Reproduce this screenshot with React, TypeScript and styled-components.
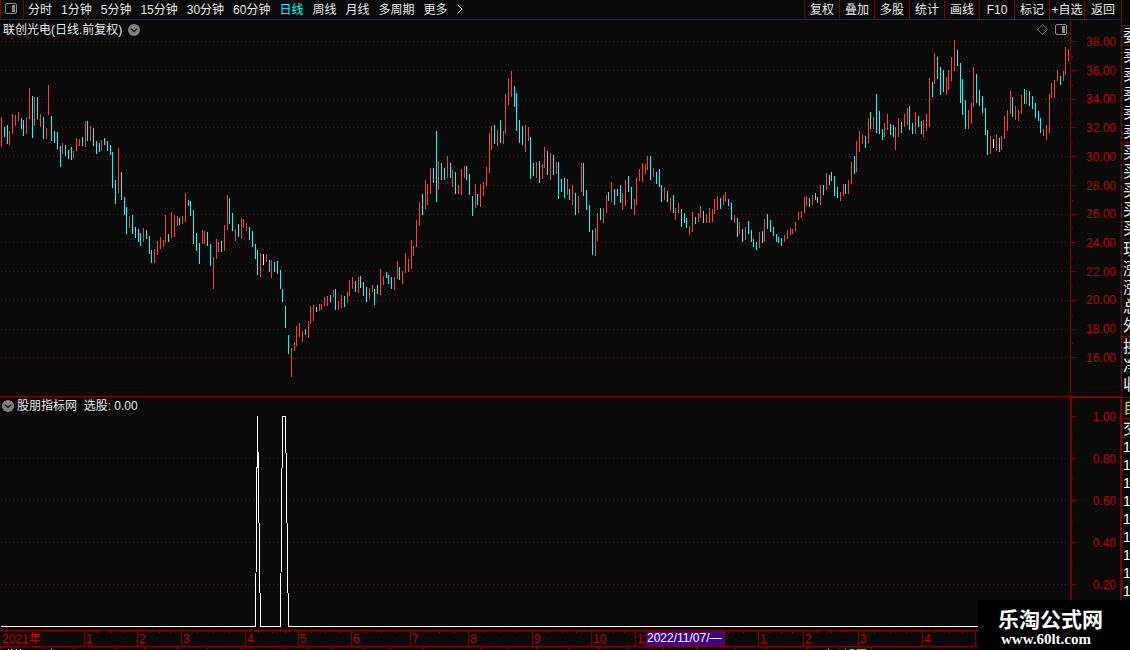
import React, { useState } from 'react';
import styled, { createGlobalStyle } from 'styled-components';

const color = {
  bg: '#0a0a0a',
  line: '#800000',
  grid: '#6a0c0c',
  label: '#c00000',
  text: '#e8e8e8',
  up: '#ff3c3c',
  down: '#00ffff',
  flat: '#ffffff',
  icon: '#8a8a8a',
};

const GlobalStyle = createGlobalStyle`
  * { box-sizing: border-box; }
  html, body { margin: 0; background: ${color.bg}; }
  body {
    font-family: "Liberation Sans", "Noto Sans CJK SC", sans-serif;
    font-size: 12px;
    line-height: 14px;
    color: ${color.text};
  }
`;

/* One bar per trading day: direction, x, high, low (chart units). */
const BARS = `
r1 117 147,c4 127 137,c7 125 144,r9 131 145,r12 114 134,r15 115 126,r18 112 121,c21 118 129,c23 120 136,r26 117 134,
r29 88 119,c32 96 138,r34 97 126,c37 97 119,r40 114 127,c43 117 139,r46 128 139,r48 85 115,c51 116 141,c54 131 143,
c57 132 149,c60 146 167,r62 143 154,c65 145 156,c68 150 159,c71 147 160,r73 151 158,r76 138 151,r79 139 146,c82 137 146,
r85 121 147,c87 121 141,r90 126 141,c93 128 146,c96 141 154,c99 143 152,r101 140 151,c104 138 145,c107 141 151,c110 145 155,
c112 152 188,c115 180 204,r118 148 193,c121 172 200,c124 197 215,c126 207 234,r129 216 228,c132 215 234,c135 227 238,c138 229 242,
c140 233 246,r143 228 242,c146 230 239,c149 236 254,c151 250 263,r154 249 263,r157 241 255,r160 237 249,r163 240 247,r165 215 243,
c168 234 242,r171 212 238,r174 215 237,r177 216 226,c179 218 225,r182 216 224,r185 193 222,c188 200 206,c190 201 216,c193 210 244,
c196 233 251,c199 243 264,r202 230 244,r204 231 244,c207 232 246,c210 244 266,r213 257 289,r216 239 259,r218 242 252,c221 241 252,
r224 225 251,r227 195 230,c229 198 224,c232 213 231,r235 229 241,c238 224 237,r241 218 239,r243 219 228,r246 223 231,c249 227 240,
c252 231 247,c255 244 259,c257 250 275,r260 253 277,w263 254 265,r266 254 262,c269 260 272,r271 260 278,c274 262 272,c277 261 274,
c280 270 289,c282 289 302,c285 306 328,c288 335 354,r291 348 377,r294 342 351,r296 326 346,r299 323 337,r302 331 342,c305 329 335,
r308 321 338,r310 306 324,r313 305 321,c316 307 312,r319 304 311,r321 304 310,r324 297 306,r327 296 306,c330 295 302,r333 290 297,
c335 289 310,r338 301 310,r341 295 308,c344 296 307,r347 292 303,r349 280 296,r352 277 289,c355 281 292,r358 277 293,c360 276 288,
c363 282 296,c366 287 302,r369 288 299,r372 285 292,c374 289 305,c377 285 294,r380 269 295,r383 276 285,c386 272 278,c388 275 284,
c391 277 289,r394 277 290,r397 261 279,c399 267 280,r402 271 284,r405 253 273,r408 259 272,r411 240 269,r413 246 256,r416 220 247,
r419 202 226,c422 194 215,r425 180 209,r427 184 205,r430 168 194,c433 168 183,c436 131 202,r438 161 190,c441 163 180,c444 168 180,
r447 156 178,c450 163 178,r452 170 187,c455 172 194,r458 185 194,r461 169 195,r464 166 178,c466 166 180,c469 174 195,c472 196 216,
r475 184 208,c477 194 205,r480 184 207,r483 182 196,r486 167 186,r489 133 173,r491 126 150,c494 125 144,r497 130 146,c500 120 143,
r503 131 144,r505 94 134,r508 79 105,r511 71 97,c514 86 107,c516 93 131,c519 120 143,c522 126 145,r525 125 152,r528 127 141,
c530 137 179,c533 163 176,r536 162 178,c539 161 183,r542 164 179,r544 147 168,c547 151 175,r550 153 180,c553 155 175,r556 162 174,
c558 162 199,c561 179 192,c564 178 198,r567 179 195,c569 189 200,r572 185 205,c575 193 215,r578 196 213,r581 163 192,c583 163 196,
c586 190 210,c589 205 232,c592 230 255,r595 228 256,r597 213 241,c600 208 220,r603 208 223,r606 195 213,c608 192 201,r611 182 202,
c614 189 205,c617 189 196,c620 185 203,r622 193 210,r625 180 206,c628 176 192,c631 187 209,r634 199 215,r636 178 205,r639 169 181,
r642 163 182,r645 164 174,r647 156 170,c650 156 180,r653 168 177,c656 172 184,c659 169 187,c661 185 202,r664 187 200,c667 191 202,
r670 198 211,c673 195 213,r675 208 220,r678 203 213,c681 209 227,c684 213 223,c686 218 228,r689 226 235,r692 212 232,c695 217 224,
r698 213 222,r700 206 218,c703 211 223,r706 214 223,r709 208 223,r712 209 222,r714 199 214,r717 196 210,c720 198 209,r723 195 205,
r725 192 202,c728 199 206,c731 203 220,r734 215 223,c737 218 237,r739 222 234,c742 229 242,r745 227 240,c748 221 234,c751 230 242,
c753 239 247,c756 242 250,r759 232 248,c762 231 243,r764 219 242,c767 214 229,c770 220 232,c773 227 236,c776 234 242,c778 237 243,
c781 238 246,r784 235 242,r787 230 239,r790 228 235,r792 229 234,r795 222 231,r798 212 220,r801 211 218,r804 197 213,r806 196 206,
c809 198 207,r812 195 205,c815 193 200,c817 197 203,r820 185 205,c823 185 195,r826 173 190,c829 175 185,c831 172 181,c834 176 196,
c837 187 198,r840 192 201,r843 184 196,c845 184 194,r848 180 194,r851 162 184,c854 156 174,r856 141 172,r859 131 152,r862 134 144,
c865 136 148,r868 118 143,c870 112 129,r873 117 129,c876 94 133,c879 111 134,c882 129 140,r884 123 137,r887 114 130,c890 124 135,
c893 125 137,r895 127 150,r898 118 137,c901 122 133,r904 114 127,r907 108 125,c909 106 130,c912 123 134,r915 112 134,c918 116 127,
c921 121 134,r923 120 137,r926 114 131,r929 78 127,c932 82 97,r934 53 84,c937 57 79,c940 67 95,c943 70 92,r946 77 95,
r948 70 90,r951 57 81,r954 40 71,c957 50 66,c960 63 103,c962 79 115,c965 100 129,r968 110 129,r971 103 123,r973 67 107,
c976 74 103,c979 90 106,c982 96 113,c985 108 135,c987 130 155,r990 136 154,w993 139 148,r996 135 151,c999 138 152,r1001 136 150,
r1004 116 139,r1007 110 131,r1010 91 114,c1012 97 117,r1015 106 120,r1018 110 121,r1021 95 114,c1024 89 104,r1026 90 104,c1029 91 106,
c1032 96 109,c1035 103 118,c1038 111 121,c1040 118 133,r1043 129 136,r1046 125 140,r1049 94 133,r1051 83 98,r1054 80 98,r1057 70 81,
c1060 76 85,r1063 71 81,r1065 47 75,r1068 49 61`
  .trim()
  .split(/,\s*/)
  .map((entry) => {
    const [x, high, low] = entry.slice(1).split(' ').map(Number);
    const kind = entry[0];
    return { x, high, low, fill: kind === 'r' ? color.up : kind === 'c' ? color.down : color.flat };
  });

const PERIODS = ['分时', '1分钟', '5分钟', '15分钟', '30分钟', '60分钟', '日线', '周线', '月线', '多周期', '更多'];
const ACTIONS = ['复权', '叠加', '多股', '统计', '画线', 'F10', '标记', '+自选', '返回'];

const PRICE_LABELS = ['38.00', '36.00', '34.00', '32.00', '30.00', '28.00', '26.00', '24.00', '22.00', '20.00', '18.00', '16.00'];
const PRICE_GRID = [41, 70, 99, 127, 156, 185, 214, 242, 271, 300, 329, 357];
const PRICE_MINOR = [56, 85, 113, 142, 171, 200, 228, 257, 286, 315, 343];
const VALUE_LABELS = ['1.00', '0.80', '0.60', '0.40', '0.20'];
const VALUE_GRID = [416, 458, 500, 542, 584];
const VALUE_MINOR = [437, 479, 521, 563];

/* Month label and its share of the time axis. */
const MONTHS: [string, number][] = [
  ['2021年', 84], ['1', 53], ['2', 44], ['3', 64], ['4', 53], ['5', 53], ['6', 59], ['7', 58], ['8', 64],
  ['9', 59], ['10', 44], ['11', 123], ['1', 45], ['2', 55], ['3', 64], ['4', 53], ['5', 146],
];
const WEEK_TICKS = [
  97, 111, 124, 150, 159, 170, 197, 213, 229, 258, 272, 285, 311, 325, 339, 366, 381, 395, 425, 439, 454,
  483, 500, 516, 547, 562, 576, 602, 613, 624, 728, 743, 769, 781, 792, 817, 831, 845, 874, 890, 906, 935, 949, 962,
];
const TAB_EDGES = [
  0, 42, 73, 115, 144, 177, 207, 241, 282, 308, 332, 364, 390, 422, 480, 508, 536, 568, 599, 628, 663, 696, 735, 766, 807, 839, 871,
];

const QUOTES: { rows: string[]; tail?: number; accent?: boolean }[] = [
  { rows: ['委'] },
  { rows: ['卖', '卖', '卖', '卖', '卖'], tail: 1 },
  { rows: ['买', '买', '买', '买', '买'], tail: 1 },
  { rows: ['现', '涨', '涨', '总', '外'], tail: 1 },
  { rows: ['换', '净', '收'], tail: 3 },
  { rows: ['自'], tail: 1, accent: true },
];

const Page = styled.div`
  position: relative;
  display: flex;
  height: 100vh;
  min-height: 400px;
  overflow: hidden;
  background: ${color.bg};
`;

const Main = styled.main`
  flex: 1;
  min-width: 0;
  display: flex;
  flex-direction: column;
`;

const Toolbar = styled.header`
  display: flex;
  height: 20px;
  flex: none;
  border-left: 1px solid ${color.line};
  border-bottom: 1px solid ${color.line};
`;

const PlainButton = styled.button`
  appearance: none;
  display: flex;
  align-items: center;
  justify-content: center;
  padding: 0;
  border: 0;
  background: none;
  color: inherit;
  font: inherit;
  white-space: nowrap;
  cursor: pointer;
`;

const LayoutToggle = styled(PlainButton)`
  width: 23px;
  padding-right: 2px;
  padding-bottom: 2px;
  border-right: 1px solid ${color.line};
`;

const Periods = styled.nav`
  display: flex;
  flex: 1;
  gap: 9px;
  padding-left: 4px;
  overflow: hidden;
`;

const PeriodButton = styled(PlainButton)<{ $active: boolean }>`
  color: ${(p) => (p.$active ? color.down : color.text)};
`;

const MoreButton = styled(PlainButton)`
  padding-bottom: 2px;
`;

const Actions = styled.div`
  display: flex;
`;

const ActionButton = styled(PlainButton)`
  width: 35px;
  border-left: 1px solid ${color.line};
  &:last-child { width: 37px; }
`;

const Pane = styled.section<{ $share: number }>`
  display: flex;
  flex: ${(p) => p.$share} 1 0px;
  min-height: 0;
`;

const PricePane = styled(Pane)`
  box-shadow: inset 0 -1px ${color.line};
`;

const Plot = styled.div`
  flex: 1;
  min-width: 0;
  display: grid;
  grid-template: minmax(0, 1fr) / minmax(0, 1fr);
`;

const Drawing = styled.svg`
  grid-area: 1 / 1;
  display: block;
  width: 100%;
  height: 100%;
  shape-rendering: crispEdges;
`;

const PlotHeader = styled.div<{ $height: number }>`
  grid-area: 1 / 1;
  align-self: start;
  z-index: 1;
  display: flex;
  align-items: center;
  height: ${(p) => p.$height}px;
  padding: 0 3px 0 2px;
  white-space: pre;
`;

const Title = styled.h1`
  margin: 0 6px 0 1px;
  font-size: 12px;
  font-weight: 400;
`;

const Reading = styled.p`
  margin: 0 0 0 3px;
`;

const HeaderTools = styled.div`
  display: flex;
  gap: 7px;
  margin-left: auto;
`;

const Axis = styled.div<{ $framed?: boolean }>`
  flex: none;
  width: 51px;
  display: grid;
  grid-template: minmax(0, 1fr) / minmax(0, 1fr);
  border: solid ${color.line};
  border-width: ${(p) => (p.$framed ? '1px 1px 0 2px' : '0 0 0 1px')};
`;

const AxisLabels = styled.ol<{ $top: number; $bottom: number; $right: number }>`
  grid-area: 1 / 1;
  display: flex;
  flex-direction: column;
  justify-content: space-between;
  margin: 0;
  padding: ${(p) => `${p.$top}px ${p.$right}px ${p.$bottom}px 0`};
  list-style: none;
  text-align: right;
  color: ${color.label};
`;

const AxisTicks = styled(Drawing)`
  width: 6px;
`;

const TimeAxis = styled.div`
  position: relative;
  flex: none;
  display: grid;
  grid-template: minmax(0, 1fr) / minmax(0, 1fr);
  height: 17px;
  border-top: 1px solid ${color.line};
  border-bottom: 1px solid ${color.line};
`;

const Months = styled.ol`
  grid-area: 1 / 1;
  display: flex;
  min-width: 0;
  margin: 0;
  padding: 0;
  list-style: none;
  color: ${color.label};
`;

/* The divider is a shadow so that it takes nothing from the month's share. */
const Month = styled.li<{ $share: number }>`
  flex: ${(p) => p.$share} 1 0px;
  min-width: 0;
  text-indent: 2px;
  line-height: 16px;
  white-space: nowrap;
  & + & { box-shadow: inset 1px 0 ${color.line}; }
`;

const DateCursor = styled.time`
  position: absolute;
  top: 0;
  bottom: 0;
  left: 646px;
  width: 79px;
  padding-left: 1px;
  border-right: 1px solid ${color.line};
  background: #400080;
  color: #ffffff;
  line-height: 14px;
  white-space: nowrap;
`;

const TabStrip = styled.div`
  flex: none;
  display: grid;
  height: 3px;
`;

const Quotes = styled.aside`
  flex: none;
  width: 9px;
  padding-top: 25px;
  overflow: hidden;
  border-left: 1px solid ${color.line};
  font-size: 16px;
  line-height: 19px;
`;

const QuoteGroup = styled.div<{ $tail: number; $accent?: boolean }>`
  width: 8px;
  overflow: hidden;
  padding-bottom: ${(p) => p.$tail}px;
  border-bottom: 1px solid ${color.line};
  color: ${(p) => (p.$accent ? '#d8d800' : color.text)};
  &:first-child { border-top: 1px solid ${color.line}; }
`;

const QuoteRow = styled.div`
  height: 19px;
  padding-left: 1px;
  white-space: nowrap;
`;

const TradeHead = styled(QuoteRow)`
  border-bottom: 1px solid ${color.line};
`;

const TradeRow = styled.div`
  height: 18px;
  padding-left: 1px;
  color: #ffffff;
  font-size: 14px;
  line-height: 18px;
`;

const Watermark = styled.div`
  position: absolute;
  right: 0;
  bottom: 0;
  z-index: 2;
  width: 152px;
  height: 50px;
  padding: 6px 0 0 20px;
  background: #000000;
  color: #ffffff;
`;

const BrandName = styled.strong`
  display: block;
  font: 700 21px/24px "Noto Sans CJK SC", sans-serif;
  white-space: nowrap;
`;

const BrandLink = styled.a`
  display: block;
  padding: 1px 0 0 3px;
  color: inherit;
  font: 700 15px/16px "Liberation Serif", serif;
  text-decoration: none;
`;

const PanelIcon = () => (
  <svg width="12" height="11" viewBox="0 0 12 11" aria-hidden="true">
    <rect x="0.5" y="0.5" width="11" height="10" rx="1.5" fill="none" stroke={color.icon} />
    <rect x="7" y="2" width="3" height="7" fill={color.icon} />
  </svg>
);

const DiamondIcon = () => (
  <svg width="11" height="11" viewBox="0 0 11 11" aria-hidden="true">
    <path d="M5.5 0.5L10.5 5.5L5.5 10.5L0.5 5.5Z" fill="none" stroke={color.icon} strokeWidth="0.8" />
  </svg>
);

const ChevronDisc = () => (
  <svg width="12" height="12" viewBox="0 0 12 12" aria-hidden="true">
    <circle cx="6" cy="6" r="6" fill="#808080" />
    <path d="M3 4.7L6 7.5L9 4.7" fill="none" stroke="#1c1c1c" strokeWidth="1.3" />
  </svg>
);

const MoreArrow = () => (
  <svg width="6" height="10" viewBox="0 0 6 10" aria-hidden="true">
    <path d="M0.7 0.7L5 5L0.7 9.3" fill="none" stroke={color.text} />
  </svg>
);

const GridLines = ({ rows }: { rows: number[] }) => (
  <>
    {rows.map((y) => (
      <line key={y} x1="1" x2="1067" y1={y + 0.5} y2={y + 0.5} stroke={color.grid} strokeDasharray="1 3" />
    ))}
  </>
);

const Ticks = ({ viewBox, major, minor, x }: { viewBox: string; major: number[]; minor: number[]; x: number }) => (
  <AxisTicks viewBox={viewBox} preserveAspectRatio="none" aria-hidden="true">
    {major.map((y) => <rect key={y} x={x} y={y} width={1076 - x} height="1" fill={color.line} />)}
    {minor.map((y) => <rect key={y} x={x} y={y} width={1073 - x} height="1" fill={color.line} />)}
  </AxisTicks>
);

export default function App() {
  const [period, setPeriod] = useState('日线');

  return (
    <Page>
      <GlobalStyle />
      <Main>
        <Toolbar>
          <LayoutToggle aria-label="切换侧栏"><PanelIcon /></LayoutToggle>
          <Periods>
            {PERIODS.map((name) => (
              <PeriodButton key={name} $active={name === period} onClick={() => setPeriod(name)}>
                {name}
              </PeriodButton>
            ))}
            <MoreButton aria-label="展开"><MoreArrow /></MoreButton>
          </Periods>
          <Actions>
            {ACTIONS.map((name) => <ActionButton key={name}>{name}</ActionButton>)}
          </Actions>
        </Toolbar>

        <PricePane $share={377}>
          <Plot>
            <Drawing viewBox="0 20 1070 377" preserveAspectRatio="none" role="img" aria-label="日线">
              <GridLines rows={PRICE_GRID} />
              {BARS.map((b) => (
                <rect key={b.x} x={b.x} y={b.high} width="1" height={b.low - b.high} fill={b.fill} />
              ))}
            </Drawing>
            <PlotHeader $height={19}>
              <Title>联创光电(日线.前复权)</Title>
              <PlainButton aria-label="股票菜单"><ChevronDisc /></PlainButton>
              <HeaderTools>
                <PlainButton aria-label="标记"><DiamondIcon /></PlainButton>
                <PlainButton aria-label="面板"><PanelIcon /></PlainButton>
              </HeaderTools>
            </PlotHeader>
          </Plot>
          <Axis>
            <Ticks viewBox="1071 20 6 377" major={PRICE_GRID} minor={PRICE_MINOR} x={1071} />
            <AxisLabels $top={15} $bottom={32} $right={5}>
              {PRICE_LABELS.map((v) => <li key={v}>{v}</li>)}
            </AxisLabels>
          </Axis>
        </PricePane>

        <Pane $share={233}>
          <Plot>
            <Drawing viewBox="0 397 1070 233" preserveAspectRatio="none" role="img" aria-label="选股">
              <GridLines rows={VALUE_GRID.slice(1)} />
              <polyline
                points="1,626.5 255.5,626.5 257.5,416.5 260.5,626.5 280.5,626.5 282.5,416.5 285.5,416.5 288.5,626.5 1070,626.5"
                fill="none"
                stroke="#ffffff"
              />
            </Drawing>
            <PlotHeader $height={17}>
              <PlainButton aria-label="指标菜单"><ChevronDisc /></PlainButton>
              <Reading>股朋指标网  选股: 0.00</Reading>
            </PlotHeader>
          </Plot>
          <Axis $framed>
            <Ticks viewBox="1072 398 6 232" major={VALUE_GRID} minor={VALUE_MINOR} x={1072} />
            <AxisLabels $top={12} $bottom={38} $right={4}>
              {VALUE_LABELS.map((v) => <li key={v}>{v}</li>)}
            </AxisLabels>
          </Axis>
        </Pane>

        <TimeAxis>
          <Drawing viewBox="0 0 1121 15" preserveAspectRatio="none" aria-hidden="true">
            {WEEK_TICKS.map((x) => <rect key={x} x={x} y="0" width="1" height="2" fill={color.line} />)}
          </Drawing>
          <Months>
            {MONTHS.map(([label, share], i) => <Month key={i} $share={share}>{label}</Month>)}
          </Months>
          <DateCursor>2022/11/07/—</DateCursor>
        </TimeAxis>

        <TabStrip>
          <Drawing viewBox="0 0 1121 3" preserveAspectRatio="none" aria-hidden="true">
            {TAB_EDGES.map((x) => <rect key={x} x={x} y="0" width="1" height="3" fill={color.line} />)}
            <path d="M8 2.5h1M11 2.5h1M16 2.5h1M20 2.5h1M51 2.5h1M828 2.5h1" stroke={color.text} />
            <path d="M845 2.5h1M850 2.5h4M857 2.5h9" stroke={color.down} />
          </Drawing>
        </TabStrip>
      </Main>

      <Quotes>
        {QUOTES.map((group, i) => (
          <QuoteGroup key={i} $tail={group.tail ?? 0} $accent={group.accent}>
            {group.rows.map((name, j) => <QuoteRow key={j}>{name}</QuoteRow>)}
          </QuoteGroup>
        ))}
        <TradeHead>交</TradeHead>
        {Array.from({ length: 9 }, (_, i) => <TradeRow key={i}>1</TradeRow>)}
      </Quotes>

      <Watermark>
        <BrandName>乐淘公式网</BrandName>
        <BrandLink href="#">www.60lt.com</BrandLink>
      </Watermark>
    </Page>
  );
}
